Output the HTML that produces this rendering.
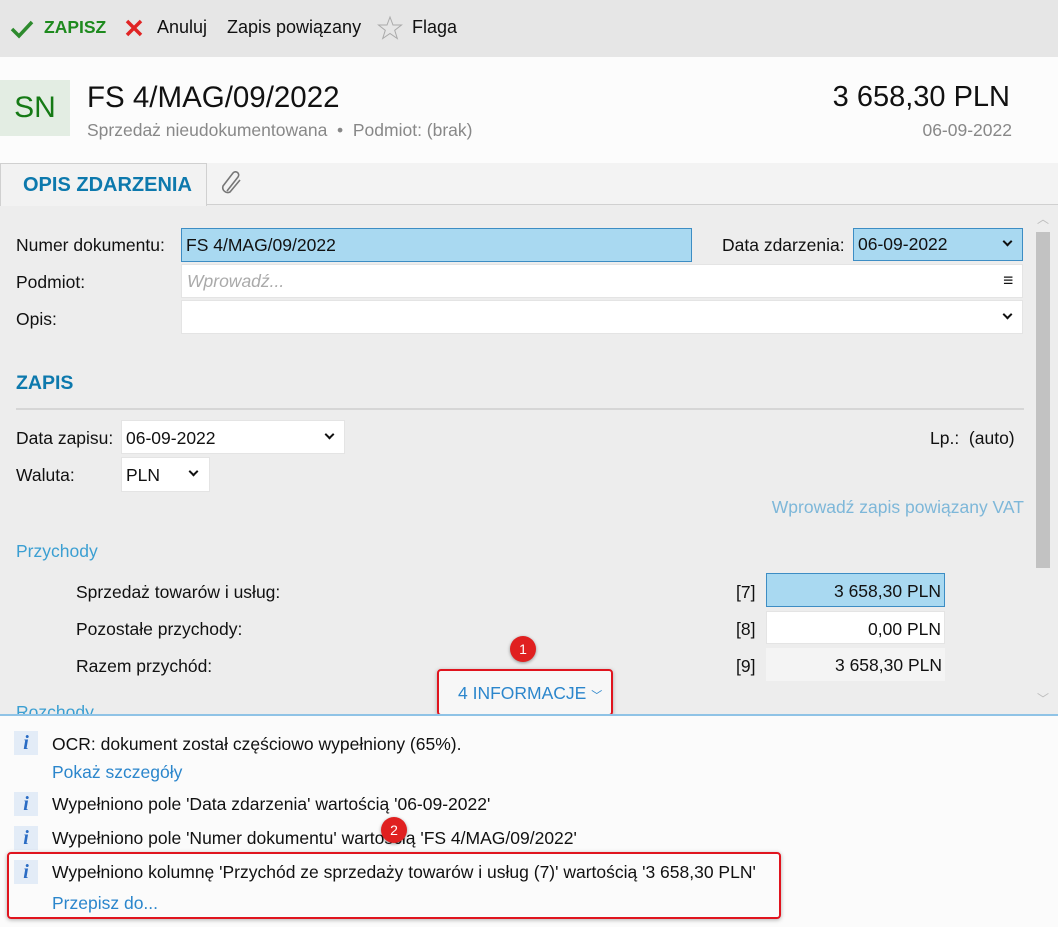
<!DOCTYPE html>
<html><head><meta charset="utf-8"><style>
*{box-sizing:border-box;margin:0;padding:0}
body{width:1058px;height:927px;overflow:hidden;font-family:"Liberation Sans",sans-serif;font-size:17.5px;color:#111;background:#ededed;position:relative}
.a{position:absolute;white-space:nowrap}
.inp{position:absolute;background:#fff;border:1px solid #e4e4e4}
.sel{background:#a9d9f1;border:1px solid #3d8dc4}
.chev{position:absolute;width:7px;height:7px;border-right:2px solid #111;border-bottom:2px solid #111;transform:rotate(45deg)}
.ic{position:absolute;left:14px;width:24px;height:24px;background:#e3ecf7;color:#2a6cc4;font:italic bold 20px "Liberation Serif",serif;text-align:center;line-height:24px}
.badge{position:absolute;width:26px;height:26px;border-radius:50%;background:#e02020;color:#fff;font-size:14px;text-align:center;line-height:26px;box-shadow:0 1px 3px rgba(0,0,0,.4)}
.rbox{position:absolute;border:2px solid #e0141e;border-radius:4px;box-shadow:0 1px 4px rgba(0,0,0,.3)}
</style></head><body>
<div class="a" style="left:0;top:0;width:1058px;height:57px;background:#e6e6e6"></div>
<svg class="a" style="left:10px;top:19px" width="24" height="20"><path d="M2 10 L9 17 L22 3" stroke="#2e8b2e" stroke-width="3.5" fill="none"/></svg>
<div class="a" style="left:44px;top:17px;color:#1e8a1e;font-weight:bold;font-size:17.5px">ZAPISZ</div>
<svg class="a" style="left:125px;top:19px" width="18" height="18"><path d="M2 2L16 16M16 2L2 16" stroke="#e02424" stroke-width="3.5"/></svg>
<div class="a" style="left:157px;top:17px;font-size:18px">Anuluj</div>
<div class="a" style="left:227px;top:17px;font-size:18px">Zapis powiązany</div>
<svg class="a" style="left:377px;top:15px" width="26" height="26"><path d="M13 2L16 10L24.5 10L17.7 15.3L20.3 23.5L13 18.5L5.7 23.5L8.3 15.3L1.5 10L10 10Z" fill="none" stroke="#aaa" stroke-width="1"/></svg>
<div class="a" style="left:412px;top:17px;font-size:18px">Flaga</div>

<div class="a" style="left:0;top:57px;width:1058px;height:106px;background:#fcfcfc"></div>
<div class="a" style="left:0;top:80px;width:70px;height:56px;background:#e3ede3;color:#157a15;font-size:30px;text-align:center;line-height:56px">SN</div>
<div class="a" style="left:87px;top:81px;font-size:29.5px">FS 4/MAG/09/2022</div>
<div class="a" style="left:87px;top:120px;color:#888">Sprzedaż nieudokumentowana &nbsp;•&nbsp; Podmiot: (brak)</div>
<div class="a" style="right:48px;top:81px;font-size:29px">3 658,30 PLN</div>
<div class="a" style="right:46px;top:120px;color:#888">06-09-2022</div>

<div class="a" style="left:0;top:163px;width:1058px;height:42px;background:#f3f3f3;border-bottom:1px solid #d0d0d0"></div>
<div class="a" style="left:0;top:163px;width:207px;height:43px;background:#f2f2f2;border:1px solid #d0d0d0;border-bottom:none;color:#0d79ad;font-weight:bold;font-size:20px;padding:10px 0 0 22px">OPIS ZDARZENIA</div>
<svg class="a" style="left:219px;top:169px" width="28" height="28"><path d="M8 22 L19 8 A3 3 0 0 0 14 4 L4 17 A5 5 0 0 0 11 23 L21 11" fill="none" stroke="#777" stroke-width="1.6"/></svg>

<div class="a" style="left:1036px;top:232px;width:14px;height:336px;background:#c2c2c2"></div>
<div class="a" style="left:1037px;top:210px;color:#bbb;font-size:12px">︿</div>
<div class="a" style="left:1037px;top:690px;color:#bbb;font-size:12px">﹀</div>

<div class="a" style="left:16px;top:235px">Numer dokumentu:</div>
<div class="inp sel" style="left:181px;top:228px;width:511px;height:34px;padding:6px 4px">FS 4/MAG/09/2022</div>
<div class="a" style="left:722px;top:235px">Data zdarzenia:</div>
<div class="inp sel" style="left:853px;top:228px;width:170px;height:33px;padding:5px 4px">06-09-2022</div>
<div class="chev" style="left:1004px;top:238px"></div>
<div class="a" style="left:16px;top:272px">Podmiot:</div>
<div class="inp" style="left:181px;top:264px;width:842px;height:34px;padding:6px 5px;color:#aaa;font-style:italic">Wprowadź...</div>
<div class="a" style="left:1003px;top:270px">≡</div>
<div class="a" style="left:16px;top:309px">Opis:</div>
<div class="inp" style="left:181px;top:300px;width:842px;height:34px"></div>
<div class="chev" style="left:1004px;top:311px"></div>

<div class="a" style="left:16px;top:372px;color:#0d79ad;font-weight:bold;font-size:19.5px">ZAPIS</div>
<div class="a" style="left:16px;top:408px;width:1008px;height:2px;background:#d6d6d6"></div>
<div class="a" style="left:16px;top:428px">Data zapisu:</div>
<div class="inp" style="left:121px;top:420px;width:224px;height:34px;padding:7px 4px">06-09-2022</div>
<div class="chev" style="left:326px;top:431px"></div>
<div class="a" style="left:16px;top:465px">Waluta:</div>
<div class="inp" style="left:121px;top:457px;width:89px;height:35px;padding:7px 4px">PLN</div>
<div class="chev" style="left:190px;top:468px"></div>
<div class="a" style="left:930px;top:428px">Lp.: &nbsp;(auto)</div>
<div class="a" style="right:34px;top:497px;color:#7db7d9">Wprowadź zapis powiązany VAT</div>
<div class="a" style="left:16px;top:541px;color:#3b9fd2">Przychody</div>

<div class="a" style="left:76px;top:582px">Sprzedaż towarów i usług:</div>
<div class="a" style="left:736px;top:582px">[7]</div>
<div class="inp sel" style="left:766px;top:573px;width:179px;height:34px;padding:7px 3px;text-align:right">3 658,30 PLN</div>
<div class="a" style="left:76px;top:619px">Pozostałe przychody:</div>
<div class="a" style="left:736px;top:619px">[8]</div>
<div class="inp" style="left:766px;top:611px;width:179px;height:33px;padding:7px 3px;text-align:right">0,00 PLN</div>
<div class="a" style="left:76px;top:656px">Razem przychód:</div>
<div class="a" style="left:736px;top:656px">[9]</div>
<div class="a" style="left:766px;top:648px;width:179px;height:33px;background:#f4f4f4;padding:7px 3px;text-align:right">3 658,30 PLN</div>

<div class="a" style="left:16px;top:702px;color:#3b9fd2;height:12px;overflow:hidden">Rozchody</div>
<div class="a" style="left:439px;top:671px;width:172px;height:43px;background:#f7f7f7"></div>
<div class="a" style="left:458px;top:683px;color:#2b86cc">4 INFORMACJE <span style="font-size:11px">﹀</span></div>
<div class="rbox" style="left:437px;top:669px;width:176px;height:47px"></div>
<div class="badge" style="left:510px;top:636px">1</div>

<div class="a" style="left:0;top:714px;width:1058px;height:213px;background:#fbfbfb;border-top:2px solid #8fc3e6"></div>
<div class="ic" style="top:731px">i</div>
<div class="a" style="left:52px;top:734px">OCR: dokument został częściowo wypełniony (65%).</div>
<div class="a" style="left:52px;top:762px;color:#2b86cc">Pokaż szczegóły</div>
<div class="ic" style="top:792px">i</div>
<div class="a" style="left:52px;top:794px">Wypełniono pole 'Data zdarzenia' wartością '06-09-2022'</div>
<div class="ic" style="top:826px">i</div>
<div class="a" style="left:52px;top:828px">Wypełniono pole 'Numer dokumentu' wartością 'FS 4/MAG/09/2022'</div>
<div class="ic" style="top:860px">i</div>
<div class="a" style="left:52px;top:862px">Wypełniono kolumnę 'Przychód ze sprzedaży towarów i usług (7)' wartością '3 658,30 PLN'</div>
<div class="a" style="left:52px;top:893px;color:#2b86cc">Przepisz do...</div>
<div class="rbox" style="left:7px;top:852px;width:774px;height:67px"></div>
<div class="badge" style="left:381px;top:817px">2</div>
</body></html>
